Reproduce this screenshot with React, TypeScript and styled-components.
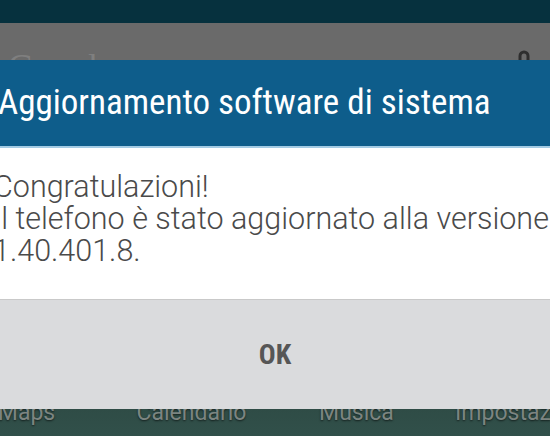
import React from "react";
import styled, { createGlobalStyle } from "styled-components";

const Global = createGlobalStyle`
  html, body { margin: 0; padding: 0; background: #2f4d46; }
  body { width: 550px; height: 436px; overflow: hidden; font-family: Roboto, "Liberation Sans", sans-serif; }
`;

const Screen = styled.div`
  width: 550px;
  height: 436px;
  display: flex;
  flex-direction: column;
  overflow: hidden;
`;

const StatusBar = styled.div`
  height: 23px;
  flex: none;
  background: #06313e;
`;

const SearchBand = styled.div`
  height: 37px;
  flex: none;
  background: #6a6a6a;
  display: flex;
  justify-content: space-between;
  align-items: flex-start;
  overflow: hidden;
  padding: 0 20px 0 8px;
`;

const Logo = styled.span`
  margin-top: 26px;
  font-family: "Liberation Serif", serif;
  font-size: 36px;
  line-height: 1;
  color: #7f7f7f;
  white-space: nowrap;
`;

const Mic = styled.svg`
  margin-top: 27px;
  width: 12px;
  height: 16px;
  flex: none;
`;

const Dialog = styled.div`
  flex: none;
  display: flex;
  flex-direction: column;
`;

const Header = styled.div`
  height: 86px;
  background: #0e5d8b;
  border-bottom: 2px solid #a3cbe4;
  display: flex;
  align-items: center;
  overflow: hidden;
`;

const Title = styled.h1`
  margin: 0 0 1px -2px;
  font-family: "Roboto Condensed", Roboto, sans-serif;
  font-weight: 400;
  font-size: 35px;
  color: #ffffff;
  white-space: nowrap;
`;

const Body = styled.div`
  height: 152px;
  box-sizing: border-box;
  background: #ffffff;
  padding: 23px 0 0 0;
  margin-left: -7px;
  overflow: hidden;
  border-bottom: 1px solid #c9c9c9;
`;

const Message = styled.p`
  margin: 0;
  font-family: Roboto, sans-serif;
  font-weight: 300;
  font-size: 30.5px;
  line-height: 32px;
  color: #4a4a4a;
  white-space: nowrap;
`;

const ButtonBar = styled.div`
  height: 109px;
  background: #dadbdd;
  display: flex;
  align-items: center;
  justify-content: center;
`;

const OkButton = styled.button`
  border: 0;
  background: transparent;
  padding: 0;
  font-family: "Roboto Condensed", Roboto, sans-serif;
  font-weight: 700;
  font-size: 28px;
  color: #565656;
`;

const Dock = styled.div`
  flex: 1;
  background: linear-gradient(#2f4c46, #31504a);
  display: flex;
  overflow: hidden;
  margin-left: -56px;
`;

const DockLabel = styled.span`
  flex: none;
  width: 165px;
  margin-top: -8px;
  text-align: center;
  font-family: Roboto, sans-serif;
  font-size: 23px;
  line-height: 23px;
  color: #7c8581;
  text-shadow: 0 1px 2px rgba(0, 0, 0, 0.6);
  white-space: nowrap;
`;

const dockApps = ["Maps", "Calendario", "Musica", "Impostazioni"];

export default function App() {
  return (
    <>
      <Global />
      <Screen>
        <StatusBar />
        <SearchBand>
          <Logo>Google</Logo>
          <Mic viewBox="0 0 12 16">
            <path d="M2 14 V6 a4 4 0 0 1 8 0 V14" fill="none" stroke="#2e2e2e" strokeWidth="3" />
          </Mic>
        </SearchBand>
        <Dialog>
          <Header>
            <Title>Aggiornamento software di sistema</Title>
          </Header>
          <Body>
            <Message>Congratulazioni!</Message>
            <Message>Il telefono è stato aggiornato alla versione</Message>
            <Message>1.40.401.8.</Message>
          </Body>
          <ButtonBar>
            <OkButton>OK</OkButton>
          </ButtonBar>
        </Dialog>
        <Dock>
          {dockApps.map((a) => (
            <DockLabel key={a}>{a}</DockLabel>
          ))}
        </Dock>
      </Screen>
    </>
  );
}
